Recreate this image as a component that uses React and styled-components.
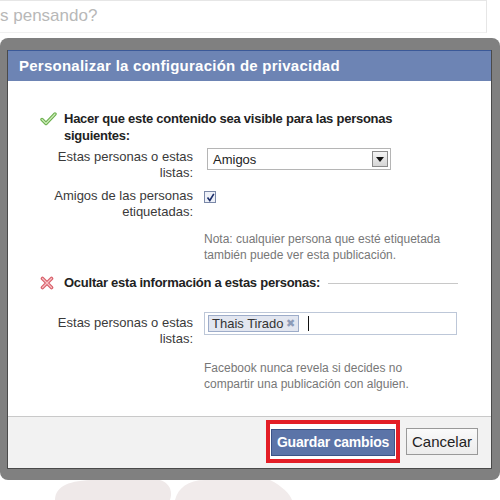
import React from 'react';
import styled, { createGlobalStyle } from 'styled-components';

const GlobalStyle = createGlobalStyle`
  body {
    margin: 0;
    background: #fff;
    font-family: "Liberation Sans", Arial, sans-serif;
    overflow: hidden;
  }
`;

const Page = styled.div`
  width: 500px;
  height: 500px;
  display: flex;
  flex-direction: column;
  overflow: hidden;
  background: #fff;
`;

const Composer = styled.div`
  height: 33px;
  width: 487px;
  box-sizing: border-box;
  border-top: 1px solid #e6e6e6;
  border-right: 1px solid #e6e6e6;
  border-bottom: 1px solid #f0f0f0;
  margin-bottom: 5px;
  color: #b8b8b8;
  font-size: 17px;
  line-height: 30px;
`;

const Frame = styled.div`
  height: 442px;
  box-sizing: border-box;
  background: #808080;
  border-radius: 8px;
  padding: 12px 8px 11px 7px;
`;

const Dialog = styled.div`
  height: 100%;
  box-sizing: border-box;
  border: 1px solid #4a4a4a;
  border-top: 0;
  background: #fff;
  display: flex;
  flex-direction: column;
`;

const Header = styled.div`
  height: 31px;
  box-sizing: border-box;
  background: #6d84b4;
  border-top: 1px solid #3b5998;
  color: #fff;
  font-weight: bold;
  font-size: 15px;
  line-height: 30px;
  padding-left: 11px;
  letter-spacing: 0.25px;
`;

const Body = styled.div`
  flex: 1;
  padding: 29px 33px 0 32px;
  color: #333;
  font-size: 13px;
`;

const Section = styled.div`
  display: flex;
  align-items: flex-start;
  margin-top: ${p => p.$mt || 0}px;
`;

const IconSlot = styled.div`
  width: 24px;
  flex: none;
  padding-top: 2px;
`;

const SectionTitle = styled.div`
  font-weight: bold;
  line-height: 17px;
  color: #222;
  letter-spacing: -0.25px;
  ${p => (p.$wide ? 'width: 345px;' : 'flex: none;')}
`;

const Rule = styled.div`
  flex: 1;
  border-top: 1px solid #c8c8c8;
  margin: 9px 0 0 8px;
`;

const Row = styled.div`
  display: grid;
  grid-template-columns: 153px 1fr;
  column-gap: 11px;
  margin-top: ${p => p.$mt || 0}px;
`;

const Label = styled.div`
  text-align: right;
  line-height: 16px;
  color: #3a3a3a;
  padding-top: ${p => p.$pt || 0}px;
`;

const Note = styled.div`
  margin: ${p => p.$mt || 0}px 0 0 164px;
  max-width: 248px;
  color: #777;
  font-size: 12px;
  line-height: 16px;
`;

const Select = styled.div`
  margin-left: 3px;
  width: 184px;
  height: 22px;
  box-sizing: border-box;
  border: 1px solid #b5b5b5;
  display: flex;
  align-items: center;
  justify-content: space-between;
  padding: 0 2px 0 5px;
  color: #222;
`;

const SelectArrow = styled.div`
  width: 16px;
  height: 16px;
  box-sizing: border-box;
  border: 1px solid #8a8a8a;
  background: linear-gradient(#f4f4f4, #d6d6d6);
  display: flex;
  align-items: center;
  justify-content: center;
`;

const Checkbox = styled.div`
  width: 12px;
  height: 12px;
  margin-top: 3px;
  box-sizing: border-box;
  border: 1px solid #7a88a8;
  background: #eef1f8;
  display: flex;
  align-items: center;
  justify-content: center;
`;

const TokenInput = styled.div`
  width: 253px;
  height: 23px;
  box-sizing: border-box;
  border: 1px solid #bdc7d8;
  display: flex;
  align-items: center;
  padding-left: 3px;
  gap: 9px;
`;

const Token = styled.span`
  height: 17px;
  box-sizing: border-box;
  border: 1px solid #9dacc9;
  background: #e2e6f0;
  padding: 0 3px;
  line-height: 15px;
  color: #333;
  font-size: 13px;
  display: inline-flex;
  align-items: center;
  gap: 2px;
`;

const TokenX = styled.span`
  color: #8d9bb8;
  font-size: 11px;
`;

const Caret = styled.span`
  width: 1px;
  height: 15px;
  background: #111;
`;

const Footer = styled.div`
  height: 52px;
  box-sizing: border-box;
  border-top: 1px solid #c9c9c9;
  background: #f2f2f2;
  display: flex;
  justify-content: flex-end;
  align-items: center;
  padding: 0 13px 3px 0;
  gap: 6px;
`;

const Highlight = styled.div`
  border: 4px solid #e31e26;
  padding: 5px 1px 3px;
  background: #fff;
`;

const Button = styled.button`
  height: 27px;
  box-sizing: border-box;
  font-family: "Liberation Sans", Arial, sans-serif;
  padding: 0;
  cursor: pointer;
  white-space: nowrap;
  font-weight: ${p => (p.$primary ? 'bold' : 'normal')};
  font-size: ${p => (p.$primary ? 14 : 15)}px;
  letter-spacing: ${p => (p.$primary ? -0.2 : 0)}px;
  width: ${p => (p.$primary ? 124 : 72)}px;
  color: ${p => (p.$primary ? '#fff' : '#222')};
  background: ${p => (p.$primary ? '#5b74a8' : 'linear-gradient(#fafafa, #ececec)')};
  border: 1px solid ${p => (p.$primary ? '#3b5488' : '#999')};
`;

const Backdrop = styled.div`
  height: 20px;
`;

const CheckIcon = () => (
  <svg width="17" height="14" viewBox="0 0 17 14">
    <path d="M2 7.5 L6 11.5 L15 2" fill="none" stroke="#6ab04c" strokeWidth="3.4" strokeLinecap="round" strokeLinejoin="round" />
    <path d="M2 7.5 L6 11.5 L15 2" fill="none" stroke="#cfeabb" strokeWidth="1.2" strokeLinecap="round" strokeLinejoin="round" />
  </svg>
);

const CrossIcon = () => (
  <svg width="14" height="14" viewBox="0 0 14 14">
    <path d="M2.5 2.5 L11.5 11.5 M11.5 2.5 L2.5 11.5" fill="none" stroke="#d9606b" strokeWidth="3.6" strokeLinecap="round" />
    <path d="M2.5 2.5 L11.5 11.5 M11.5 2.5 L2.5 11.5" fill="none" stroke="#f6c2c6" strokeWidth="1.2" strokeLinecap="round" />
  </svg>
);

const App = () => (
  <>
    <GlobalStyle />
    <Page>
      <Composer>s pensando?</Composer>
      <Frame>
        <Dialog>
          <Header>Personalizar la configuración de privacidad</Header>
          <Body>
            <Section>
              <IconSlot><CheckIcon /></IconSlot>
              <SectionTitle $wide>Hacer que este contenido sea visible para las personas siguientes:</SectionTitle>
            </Section>
            <Row $mt={4}>
              <Label $pt={1}>Estas personas o estas listas:</Label>
              <Select>
                Amigos
                <SelectArrow>
                  <svg width="8" height="5" viewBox="0 0 8 5"><path d="M0 0 H8 L4 5 Z" fill="#111" /></svg>
                </SelectArrow>
              </Select>
            </Row>
            <Row $mt={7}>
              <Label>Amigos de las personas etiquetadas:</Label>
              <div>
                <Checkbox>
                  <svg width="9" height="9" viewBox="0 0 9 9"><path d="M1.5 4.5 L3.8 7.5 L7.8 0.8" fill="none" stroke="#1d2f6b" strokeWidth="1.6" /></svg>
                </Checkbox>
              </div>
            </Row>
            <Note $mt={11}>Nota: cualquier persona que esté etiquetada también puede ver esta publicación.</Note>
            <Section $mt={11}>
              <IconSlot><CrossIcon /></IconSlot>
              <SectionTitle>Ocultar esta información a estas personas:</SectionTitle>
              <Rule />
            </Section>
            <Row $mt={19}>
              <Label $pt={3}>Estas personas o estas listas:</Label>
              <TokenInput>
                <Token>Thais Tirado<TokenX>✖</TokenX></Token>
                <Caret />
              </TokenInput>
            </Row>
            <Note $mt={13}>Facebook nunca revela si decides no compartir una publicación con alguien.</Note>
          </Body>
          <Footer>
            <Highlight>
              <Button $primary>Guardar cambios</Button>
            </Highlight>
            <Button>Cancelar</Button>
          </Footer>
        </Dialog>
      </Frame>
      <Backdrop>
        <svg width="500" height="20" viewBox="0 0 500 20">
          <path d="M55 20 C55 6 70 0 95 0 L160 0 C172 4 172 14 170 20 Z" fill="#efe9e9" />
          <path d="M175 20 C178 8 188 0 205 0 L270 0 C282 6 290 14 292 20 Z" fill="#f1ebeb" />
        </svg>
      </Backdrop>
    </Page>
  </>
);

export default App;
